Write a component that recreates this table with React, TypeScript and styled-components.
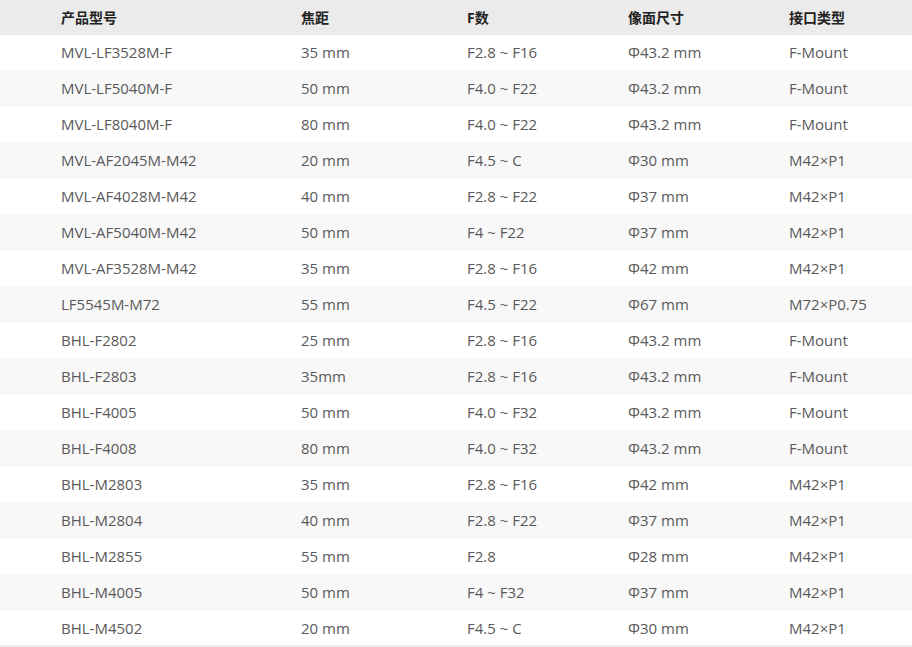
import { FC } from 'react';
import styled, { createGlobalStyle } from 'styled-components';

const GlobalStyle = createGlobalStyle`
	html, body {
		margin: 0;
		padding: 0;
		background: #ffffff;
	}
	body {
		font-family: 'Open Sans', 'Noto Sans CJK SC', sans-serif;
	}
`;

type Lens = {
	model: string;
	focal: string;
	fNumber: string;
	imageSize: string;
	mount: string;
};

const lenses: Lens[] = [
	{ model: 'MVL-LF3528M-F', focal: '35 mm', fNumber: 'F2.8 ~ F16', imageSize: 'Φ43.2 mm', mount: 'F-Mount' },
	{ model: 'MVL-LF5040M-F', focal: '50 mm', fNumber: 'F4.0 ~ F22', imageSize: 'Φ43.2 mm', mount: 'F-Mount' },
	{ model: 'MVL-LF8040M-F', focal: '80 mm', fNumber: 'F4.0 ~ F22', imageSize: 'Φ43.2 mm', mount: 'F-Mount' },
	{ model: 'MVL-AF2045M-M42', focal: '20 mm', fNumber: 'F4.5 ~ C', imageSize: 'Φ30 mm', mount: 'M42×P1' },
	{ model: 'MVL-AF4028M-M42', focal: '40 mm', fNumber: 'F2.8 ~ F22', imageSize: 'Φ37 mm', mount: 'M42×P1' },
	{ model: 'MVL-AF5040M-M42', focal: '50 mm', fNumber: 'F4 ~ F22', imageSize: 'Φ37 mm', mount: 'M42×P1' },
	{ model: 'MVL-AF3528M-M42', focal: '35 mm', fNumber: 'F2.8 ~ F16', imageSize: 'Φ42 mm', mount: 'M42×P1' },
	{ model: 'LF5545M-M72', focal: '55 mm', fNumber: 'F4.5 ~ F22', imageSize: 'Φ67 mm', mount: 'M72×P0.75' },
	{ model: 'BHL-F2802', focal: '25 mm', fNumber: 'F2.8 ~ F16', imageSize: 'Φ43.2 mm', mount: 'F-Mount' },
	{ model: 'BHL-F2803', focal: '35mm', fNumber: 'F2.8 ~ F16', imageSize: 'Φ43.2 mm', mount: 'F-Mount' },
	{ model: 'BHL-F4005', focal: '50 mm', fNumber: 'F4.0 ~ F32', imageSize: 'Φ43.2 mm', mount: 'F-Mount' },
	{ model: 'BHL-F4008', focal: '80 mm', fNumber: 'F4.0 ~ F32', imageSize: 'Φ43.2 mm', mount: 'F-Mount' },
	{ model: 'BHL-M2803', focal: '35 mm', fNumber: 'F2.8 ~ F16', imageSize: 'Φ42 mm', mount: 'M42×P1' },
	{ model: 'BHL-M2804', focal: '40 mm', fNumber: 'F2.8 ~ F22', imageSize: 'Φ37 mm', mount: 'M42×P1' },
	{ model: 'BHL-M2855', focal: '55 mm', fNumber: 'F2.8', imageSize: 'Φ28 mm', mount: 'M42×P1' },
	{ model: 'BHL-M4005', focal: '50 mm', fNumber: 'F4 ~ F32', imageSize: 'Φ37 mm', mount: 'M42×P1' },
	{ model: 'BHL-M4502', focal: '20 mm', fNumber: 'F4.5 ~ C', imageSize: 'Φ30 mm', mount: 'M42×P1' },
];

const StyledTable = styled.div`
	width: 912px;
	display: flex;
	flex-direction: column;
`;

const StyledRow = styled.div<{ $header?: boolean; $striped?: boolean }>`
	display: grid;
	grid-template-columns: 240px 166px 161px 161px 1fr;
	align-items: center;
	padding-left: 61px;
	padding-bottom: ${({ $header }) => ($header ? 0 : 2)}px;
	box-sizing: border-box;
	height: ${({ $header }) => ($header ? 35 : 36)}px;
	background-color: ${({ $header, $striped }) => ($header ? '#ebebeb' : $striped ? '#f8f8f8' : '#ffffff')};
	color: ${({ $header }) => ($header ? '#222222' : '#5a5a5a')};
	font-size: ${({ $header }) => ($header ? 14 : 15)}px;
	font-weight: ${({ $header }) => ($header ? 700 : 400)};

	&:last-child {
		border-bottom: 2px solid #ededed;
		padding-bottom: 0;
	}
`;

const StyledCell = styled.div`
	white-space: nowrap;
	line-height: 20px;
`;

const columns = ['产品型号', '焦距', 'F数', '像面尺寸', '接口类型'];

const App: FC = () => {
	return (
		<>
			<GlobalStyle />
			<StyledTable>
				<StyledRow $header>
					{columns.map((title) => (
						<StyledCell key={title}>{title}</StyledCell>
					))}
				</StyledRow>

				{lenses.map((lens, index) => (
					<StyledRow key={lens.model} $striped={index % 2 === 1}>
						<StyledCell>{lens.model}</StyledCell>
						<StyledCell>{lens.focal}</StyledCell>
						<StyledCell>{lens.fNumber}</StyledCell>
						<StyledCell>{lens.imageSize}</StyledCell>
						<StyledCell>{lens.mount}</StyledCell>
					</StyledRow>
				))}
			</StyledTable>
		</>
	);
};

export default App;
